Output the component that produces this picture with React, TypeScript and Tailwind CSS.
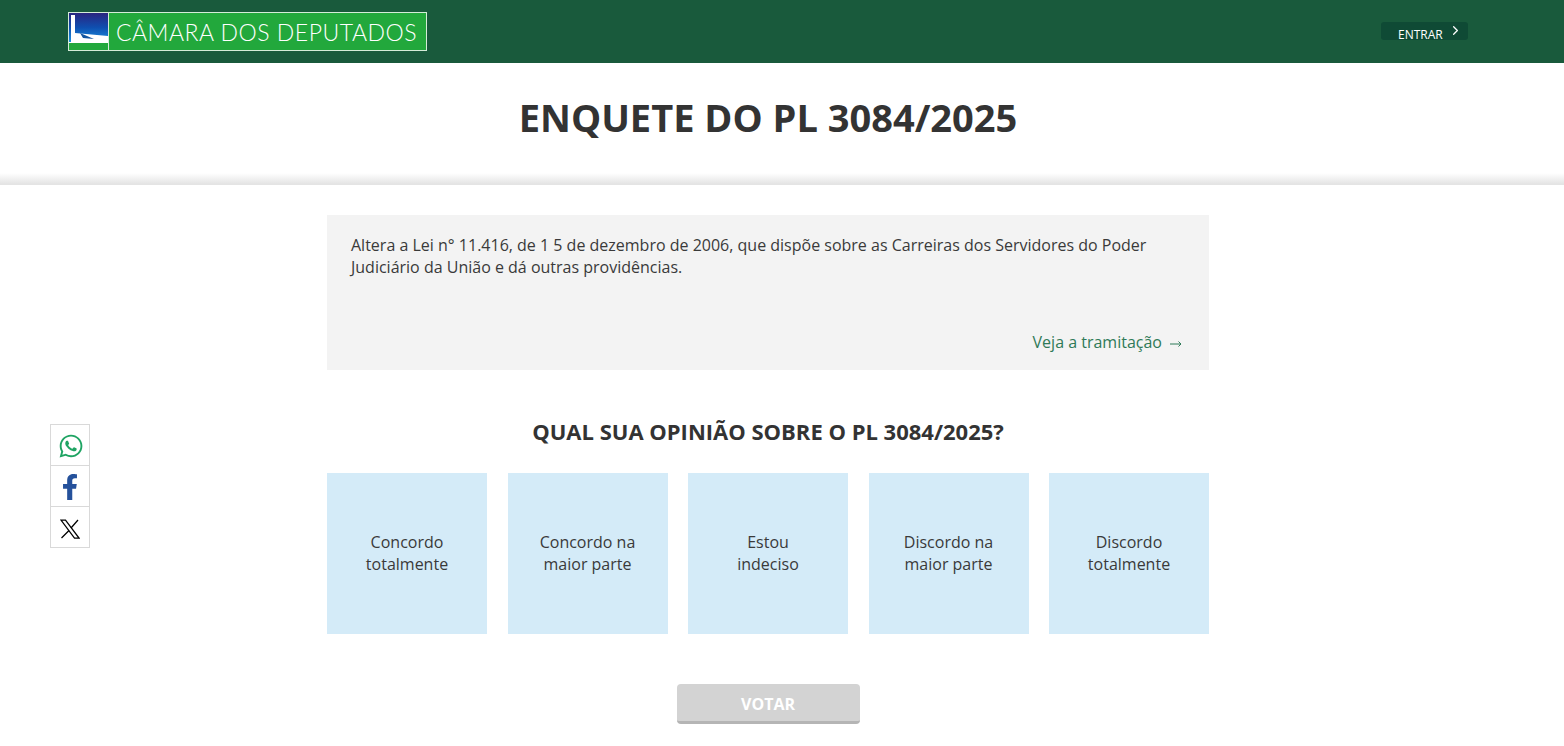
import React from "react";
import { FaWhatsapp, FaFacebookF } from "react-icons/fa";
import { ChevronRight } from "lucide-react";

const options = [
  ["Concordo", "totalmente"],
  ["Concordo na", "maior parte"],
  ["Estou", "indeciso"],
  ["Discordo na", "maior parte"],
  ["Discordo", "totalmente"],
];

function Logo() {
  return (
    <div className="flex h-[39px] w-[359px] border border-[#d5ecd9] bg-[#22a83c]">
      <svg width="39" height="37" viewBox="0 0 39 37" className="shrink-0">
        <defs>
          <linearGradient id="sky" x1="0" y1="0" x2="0" y2="1">
            <stop offset="0" stopColor="#2a2580" />
            <stop offset="0.5" stopColor="#0f4fb0" />
            <stop offset="1" stopColor="#1a90e0" />
          </linearGradient>
        </defs>
        <rect width="39" height="37" fill="#22a83c" />
        <rect width="39" height="29" fill="url(#sky)" />
        <path d="M2 29 L2 2 L6 2 L6 20 L39 23 L39 29 Z" fill="#ffffff" />
        <path d="M11 20 L25 26 L14 25 Z" fill="#14559f" />
        <rect x="0" y="29" width="39" height="1" fill="#ffffff" />
      </svg>
      <div className="w-[1px] bg-[#d5ecd9]" />
      <div className="flex-1 pl-[7px] pt-[1px] font-['Lato',sans-serif] text-[23px] font-light leading-[37px] tracking-[0.5px] whitespace-nowrap text-white">
        CÂMARA DOS DEPUTADOS
      </div>
    </div>
  );
}

function App() {
  return (
    <div className="relative h-[746px] w-[1564px] overflow-hidden bg-white font-['Open_Sans',sans-serif]">
      {/* Header */}
      <header className="flex h-[63px] items-start justify-between bg-[#195a3c] pt-[12px] pl-[68px] pr-[96px]">
        <Logo />
        <a className="mt-[10px] flex h-[18px] w-[87px] items-start rounded-[3px] bg-[#0f4a35] pl-[17px] text-[12px] leading-[25px] text-white">
          ENTRAR
          <ChevronRight className="mt-[1px] ml-[5px] text-white" size={15} strokeWidth={2} />
        </a>
      </header>

      <div className="w-[1536px]">
        {/* Title */}
        <div className="h-[110px] pt-[29px] text-center text-[38px] font-bold leading-[50px] text-[#333333]">
          ENQUETE DO PL 3084/2025
        </div>
        <div className="h-[12px] w-[1564px] border-b border-[#e4e4e4] bg-gradient-to-b from-white to-[#e4e4e4]" />

        <main className="mx-auto w-[882px] pt-[30px]">
          {/* Ementa */}
          <div className="flex h-[155px] flex-col justify-between bg-[#f3f3f3] px-[24px] pt-[19px] pb-[17px] text-[16px] leading-[22px] text-[#3a3a3a]">
            <p>
              Altera a Lei n° 11.416, de 1 5 de dezembro de 2006, que dispõe sobre as Carreiras dos Servidores do Poder
              Judiciário da União e dá outras providências.
            </p>
            <a className="mr-[3px] flex h-[22px] items-center gap-[8px] self-end text-[#2f7a58]">
              Veja a tramitação
              <svg width="12" height="8" viewBox="0 0 12 8" fill="none" stroke="#2f7a58" strokeWidth="1" className="mt-[3px]">
                <path d="M0 4 H11 M8.5 1.5 L11 4 L8.5 6.5" />
              </svg>
            </a>
          </div>

          <h2 className="pt-[46px] pb-[27px] text-center text-[22px] font-bold leading-[30px] text-[#333333]">
            QUAL SUA OPINIÃO SOBRE O PL 3084/2025?
          </h2>

          {/* Opcoes */}
          <div className="flex justify-between">
            {options.map((item, index) => (
              <button
                key={index}
                className="flex h-[161px] w-[160px] flex-col items-center justify-center bg-[#d4ebf8] pb-[2px] text-[16px] leading-[22px] text-[#3a3a3a]"
              >
                <span>{item[0]}</span>
                <span>{item[1]}</span>
              </button>
            ))}
          </div>

          <div className="flex justify-center pt-[50px]">
            <button className="h-[40px] w-[183px] rounded-[4px] border-b-[3px] border-[#b5b5b5] bg-[#d3d3d3] pt-[2px] text-[16px] font-bold text-white">
              VOTAR
            </button>
          </div>
        </main>
      </div>

      {/* Compartilhar */}
      <div className="absolute left-[50px] top-[424px] flex w-[40px] flex-col border border-[#d9d9d9] bg-white">
        <div className="flex h-[41px] items-center justify-center border-b border-[#d9d9d9] pt-[2px] pl-[1px]">
          <FaWhatsapp size={26} className="text-[#1fa463]" />
        </div>
        <div className="flex h-[41px] items-center justify-center border-b border-[#d9d9d9] pt-[2px]">
          <FaFacebookF size={26} className="text-[#25519b]" />
        </div>
        <div className="flex h-[40px] items-center justify-center pt-[3px]">
          <svg width="20" height="20" viewBox="0 0 20 20" fill="none" stroke="#000000" strokeWidth="1.25">
            <path d="M1 1 H5.5 L19 19 H14.5 Z" />
            <path d="M18 1 L11 9 M9 11.5 L1.5 19" />
          </svg>
        </div>
      </div>
    </div>
  );
}

export default App;
